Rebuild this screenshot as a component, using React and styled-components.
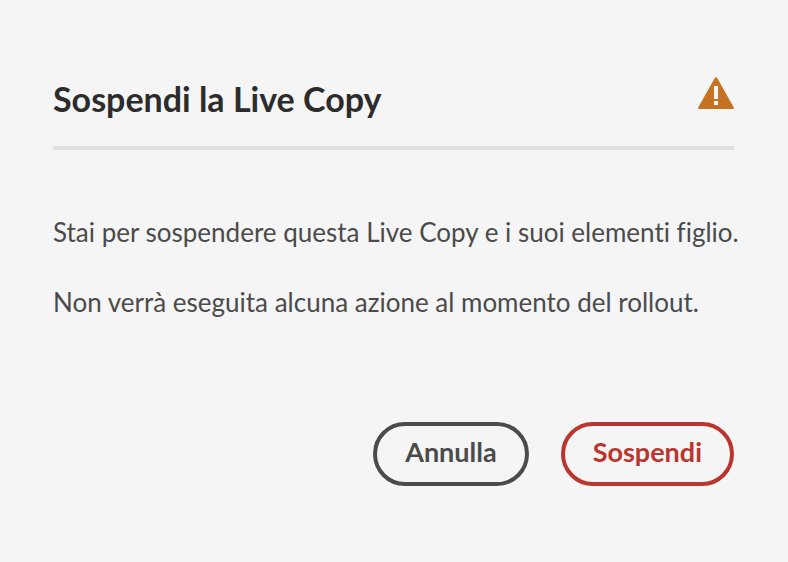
import React from "react";
import styled, { createGlobalStyle } from "styled-components";

const GlobalStyle = createGlobalStyle`
  *, *::before, *::after { box-sizing: border-box; }
  body {
    margin: 0;
    background: #f5f5f5;
    color: #4b4b4b;
    font-family: Lato, sans-serif;
    font-variant-ligatures: none;
  }
`;

const Dialog = styled.section`
  padding: 76px 54px 76px 53px;
`;

const Header = styled.header`
  display: flex;
  align-items: flex-start;
  justify-content: space-between;
  gap: 24px;
  padding-bottom: 24px;
  border-bottom: 4px solid #e1e1e1;
`;

const Title = styled.h1`
  margin: 0;
  color: #2c2c2c;
  font-size: 34px;
  font-weight: 700;
  line-height: 46px;
`;

const AlertIcon = styled.svg`
  display: block;
  flex: none;
  width: 36px;
  height: 34px;
`;

const Content = styled.div`
  display: grid;
  gap: 30px;
  padding-top: 62px;
`;

const Message = styled.p`
  margin: 0;
  font-size: 26px;
  line-height: 40px;

  @media (min-width: 780px) {
    white-space: nowrap;
  }
`;

const Footer = styled.footer`
  display: flex;
  flex-wrap: wrap;
  justify-content: flex-end;
  gap: 32px;
  padding-top: 100px;
`;

const Button = styled.button`
  height: 64px;
  padding: 0 28px 4px;
  border: 4px solid currentColor;
  border-radius: 32px;
  background: transparent;
  color: ${({ $warning }) => ($warning ? "#bb3530" : "#4b4b4b")};
  font-family: inherit;
  font-size: 27px;
  font-weight: 700;
  line-height: 36px;
  cursor: pointer;
`;

export default function App() {
  return (
    <>
      <GlobalStyle />
      <Dialog role="dialog" aria-labelledby="dialog-title">
        <Header>
          <Title id="dialog-title">Sospendi la Live Copy</Title>
          <AlertIcon viewBox="0 0 36 34" aria-hidden="true">
            <path
              fill="#c57225"
              fillRule="evenodd"
              d="M16.900 1.800a1.300 1.300 0 0 1 2.200 0l16.600 29.500A1.200 1.200 0 0 1 34.700 33H1.300a1.200 1.200 0 0 1-1-1.700ZM16 10v13h4V10ZM16 25v4h4v-4Z"
            />
          </AlertIcon>
        </Header>
        <Content>
          <Message>Stai per sospendere questa Live Copy e i suoi elementi figlio.</Message>
          <Message>Non verrà eseguita alcuna azione al momento del rollout.</Message>
        </Content>
        <Footer>
          <Button type="button">Annulla</Button>
          <Button type="button" $warning>Sospendi</Button>
        </Footer>
      </Dialog>
    </>
  );
}
